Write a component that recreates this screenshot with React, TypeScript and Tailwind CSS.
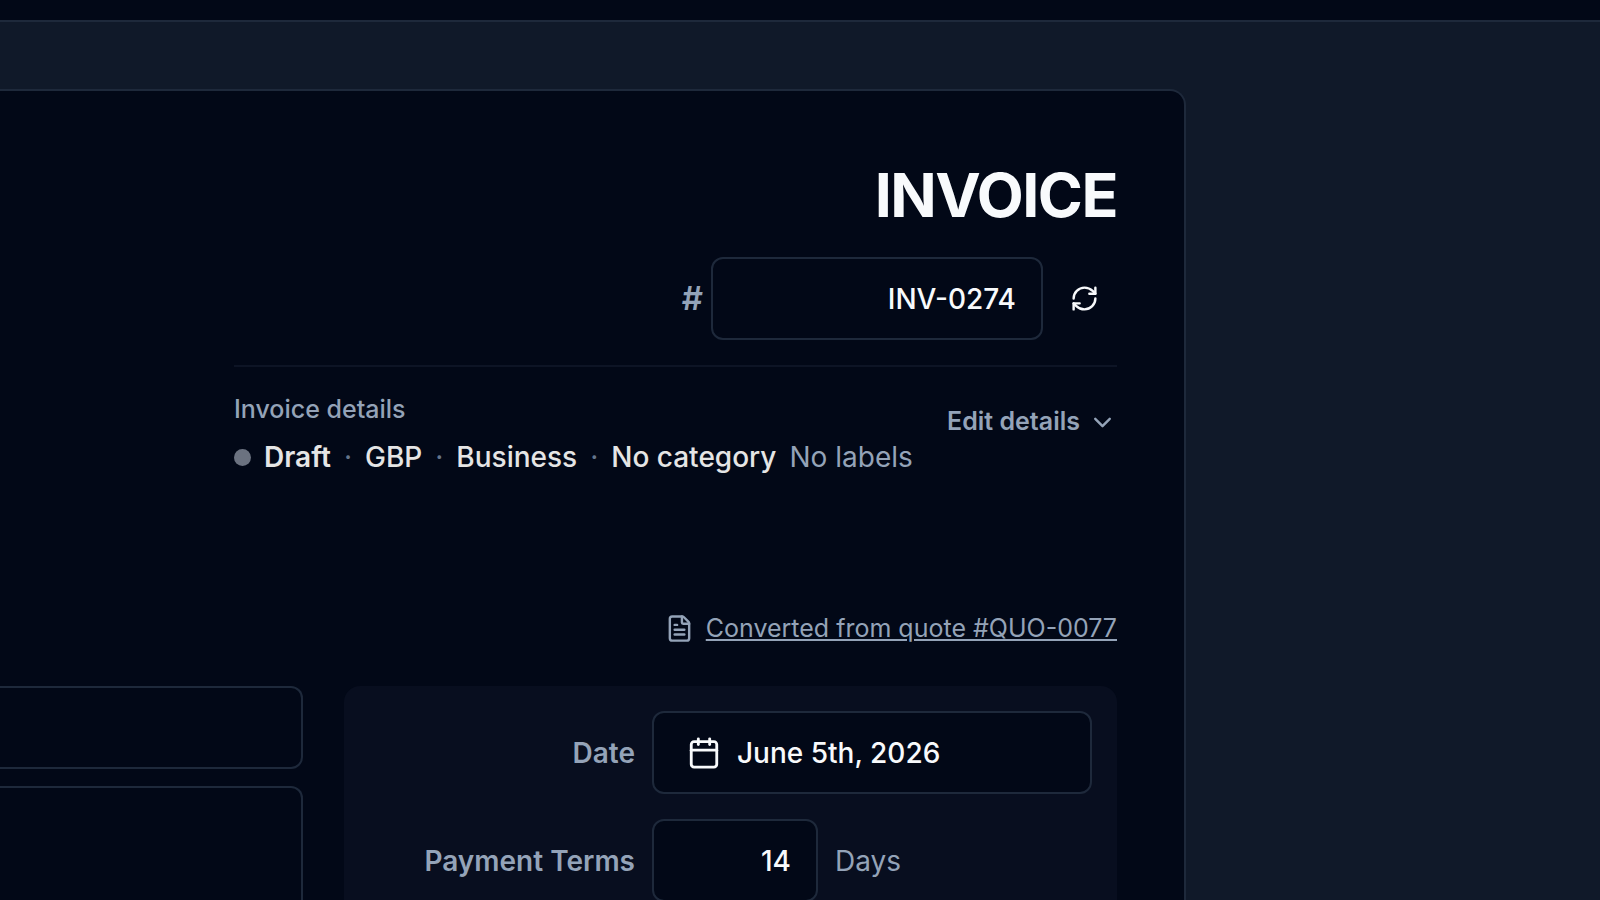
import React, { useState } from "react";
import { Calendar, ChevronDown, FileText, RefreshCw } from "lucide-react";

const fieldClass = "h-[83px] rounded-xl border-2 border-[#1e293b] bg-[#020817] text-[28px] font-medium text-[#f8fafc]";

const details = ["GBP", "Business", "No category"];

export default function App() {
  const [number, setNumber] = useState("INV-0274");
  const [terms, setTerms] = useState("14");

  return (
    <div className="flex h-screen flex-col overflow-hidden bg-[#101929] font-['Inter',sans-serif] text-[#f8fafc]">

      {/* TOP BAR */}
      <header className="h-[22px] shrink-0 border-b-2 border-[#1e293b] bg-[#020817]" />

      <main className="flex-1 pt-[67px] pr-[414px]">
        <div className="min-h-full rounded-tr-2xl border-t-2 border-r-2 border-[#1e293b] bg-[#020817] pt-[67px] pr-[67px]">

          {/* INVOICE HEADER */}
          <div className="ml-[234px] flex flex-col">
            <h1 className="text-right text-[61px] leading-[75px] font-bold tracking-tight">INVOICE</h1>

            <div className="mt-6 flex items-center justify-end gap-2">
              <label htmlFor="number" className="text-[33px] font-semibold text-[#94a3b8]">#</label>
              <input
                id="number"
                value={number}
                onChange={(e) => setNumber(e.target.value)}
                className={`${fieldClass} w-[332px] px-[25px] text-right`}
              />
              <button aria-label="Refresh number" className="flex h-[66px] w-[66px] items-center justify-center">
                <RefreshCw size={29} />
              </button>
            </div>

            <div className="mt-[25px] flex items-start justify-between border-t-2 border-[#1e293b]/40 pt-[26px]">
              <div>
                <p className="text-[25px] leading-[33px] font-medium text-[#94a3b8]">Invoice details</p>
                <div className="mt-[11px] flex items-center gap-[13px] text-[28px] leading-[41px] text-neutral-200">
                  <span className="size-[17px] rounded-full bg-[#6b7280]" />
                  <span className="font-semibold">Draft</span>
                  {details.map((item) => (
                    <React.Fragment key={item}>
                      <span className="text-[#64748b]">·</span>
                      <span className="font-medium">{item}</span>
                    </React.Fragment>
                  ))}
                  <span className="text-[#94a3b8]">No labels</span>
                </div>
              </div>
              <button className="flex h-[58px] items-center gap-2 text-[25px] font-semibold text-[#94a3b8]">
                Edit details
                <ChevronDown size={29} />
              </button>
            </div>
          </div>

          {/* SOURCE QUOTE */}
          <div className="mt-[134px] flex items-center justify-end gap-3 text-[25px] leading-[33px] text-[#94a3b8]">
            <FileText size={29} />
            <a href="#quote" className="underline">Converted from quote #QUO-0077</a>
          </div>

          <div className="mt-[41px] grid grid-cols-[303fr_773fr] gap-[41px]">
            {/* CLIENT */}
            <div className="flex flex-col gap-[17px]">
              <input aria-label="Client name" className={`${fieldClass} w-full rounded-l-none border-l-0 px-[25px]`} />
              <textarea
                aria-label="Client address"
                className="h-[200px] w-full resize-none rounded-r-xl border-2 border-l-0 border-[#1e293b] bg-[#020817] p-[25px] text-[28px]"
              />
            </div>

            {/* DATES */}
            <div className="flex flex-col gap-[25px] rounded-2xl bg-[#080e1f] p-[25px]">
              <div className="flex items-center justify-end gap-[17px]">
                <label htmlFor="date" className="text-[28px] font-semibold text-[#94a3b8]">Date</label>
                <button id="date" className={`${fieldClass} flex w-[440px] items-center gap-4 px-[33px]`}>
                  <Calendar size={34} />
                  June 5th, 2026
                </button>
              </div>
              <div className="flex items-center justify-end gap-[17px]">
                <label htmlFor="terms" className="text-[28px] font-semibold text-[#94a3b8]">Payment Terms</label>
                <div className="flex w-[440px] items-center gap-[17px]">
                  <input
                    id="terms"
                    value={terms}
                    onChange={(e) => setTerms(e.target.value)}
                    className={`${fieldClass} w-[166px] px-[25px] text-right`}
                  />
                  <span className="text-[28px] text-[#94a3b8]">Days</span>
                </div>
              </div>
            </div>
          </div>

        </div>
      </main>
    </div>
  );
}
